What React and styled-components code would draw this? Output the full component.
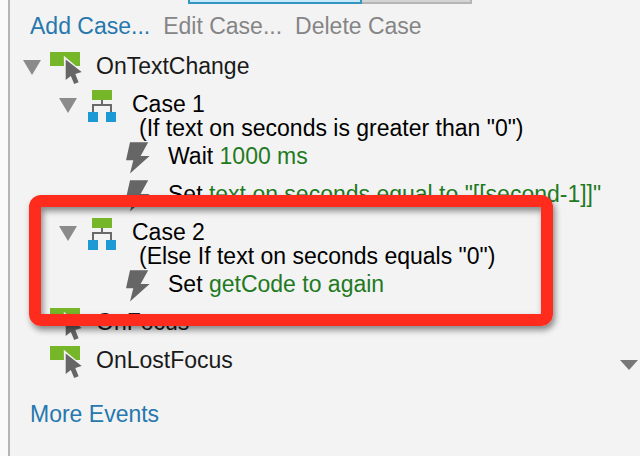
import { useState } from 'react';
import styled, { createGlobalStyle } from 'styled-components';

export default function App() {

    const [openEvent, setOpenEvent] = useState(true);
    const [openCases, setOpenCases] = useState({ 1: true, 2: true });

    function toggleCase(id) {
        setOpenCases({ ...openCases, [id]: !openCases[id] });
    }

    return (
        <>
            <GlobalStyle />
            <Panel>
                <Tabs>
                    <Tab $active $width={174} aria-label="Properties" />
                    <Tab $width={110} aria-label="Notes" />
                </Tabs>
                <Toolbar>
                    <ActionButton>Add Case...</ActionButton>
                    <ActionButton disabled>Edit Case...</ActionButton>
                    <ActionButton disabled>Delete Case</ActionButton>
                </Toolbar>
                <Tree>
                    <EventRow name="OnTextChange" open={openEvent} onToggle={() => setOpenEvent(!openEvent)} />
                    {openEvent && (
                        <>
                            <Case
                                name="Case 1"
                                condition={'(If text on seconds is greater than "0")'}
                                open={openCases[1]}
                                onToggle={() => toggleCase(1)}
                                actions={[
                                    { verb: "Wait", detail: "1000 ms" },
                                    { verb: "Set", detail: 'text on seconds equal to "[[second-1]]"' },
                                ]}
                            />
                            <Case
                                name="Case 2"
                                condition={'(Else If text on seconds equals "0")'}
                                open={openCases[2]}
                                onToggle={() => toggleCase(2)}
                                actions={[{ verb: "Set", detail: "getCode to again" }]}
                                highlighted
                            />
                        </>
                    )}
                    <EventRow name="OnFocus" />
                    <EventRow name="OnLostFocus" menu />
                </Tree>
                <Footer>
                    <ActionButton>More Events</ActionButton>
                </Footer>
            </Panel>
        </>
    )
}

function EventRow({ name, open, onToggle, menu }) {
    return (
        <Row $depth={0}>
            <ToggleSlot>
                {onToggle && <Toggle label={name} open={open} onClick={onToggle} />}
            </ToggleSlot>
            <EventIcon />
            <EventName>{name}</EventName>
            {menu && (
                <MenuButton aria-label="Show all events">
                    <svg width="18" height="10" viewBox="0 0 18 10">
                        <path d="M0 0H18L9 10Z" fill="#777" />
                    </svg>
                </MenuButton>
            )}
        </Row>
    )
}

function Case({ name, condition, open, onToggle, actions, highlighted }) {
    return (
        <CaseGroup>
            <Row $depth={1}>
                <ToggleSlot>
                    <Toggle label={name} open={open} onClick={onToggle} />
                </ToggleSlot>
                <CaseIcon />
                <CaseText>
                    <div>{name}</div>
                    <Condition>{condition}</Condition>
                </CaseText>
            </Row>
            {open && (
                <Actions>
                    {actions.map(action => (
                        <Row $depth={2} key={action.detail}>
                            <ToggleSlot />
                            <ActionIcon />
                            <div>{action.verb} <Detail>{action.detail}</Detail></div>
                        </Row>
                    ))}
                </Actions>
            )}
            {highlighted && <Highlight />}
        </CaseGroup>
    )
}

function Toggle({ label, open, onClick }) {
    return (
        <ToggleButton $open={open} aria-label={label} aria-expanded={open} onClick={onClick}>
            <svg width="18" height="15" viewBox="0 0 18 15">
                <path d="M0 0H18L9 15Z" fill="#8b8b8b" />
            </svg>
        </ToggleButton>
    )
}

function EventIcon() {
    return (
        <Icon width="32" height="28" viewBox="0 0 32 28">
            <rect width="30" height="14" fill="#76b729" />
            <path d="M13.8 3.8L26 14H14Z" fill="#f3f3f3" />
            <path d="M15.7 7.5L31.7 20L25.3 22L28.6 30.2L24.2 32L20.8 24L15.7 28Z" fill="#666" />
        </Icon>
    )
}

function CaseIcon() {
    return (
        <Icon width="32" height="28" viewBox="0 0 32 28">
            <path d="M16 10V15M7 22V15H25V22" fill="none" stroke="#6a6a6a" strokeWidth="2" />
            <rect x="6" y="0" width="20" height="10" fill="#76b729" />
            <rect x="2" y="22" width="10" height="10" fill="#1c9ad6" />
            <rect x="20" y="22" width="10" height="10" fill="#1c9ad6" />
        </Icon>
    )
}

function ActionIcon() {
    return (
        <Icon width="32" height="28" viewBox="0 0 32 28">
            <path d="M8 .3H26.2L18.6 14H27.6L8 31.6L11.3 18.3H4Z" fill="#666" />
        </Icon>
    )
}



/* --- STYLES --- */
const GlobalStyle = createGlobalStyle`
    *{
        box-sizing: border-box;
    }
    body{
        margin: 0;
        background: #fafafa;
        color: #000;
        font-family: "Liberation Sans", Arial, sans-serif;
        font-size: 23px;
        line-height: 28px;
    }
    button{
        padding: 0;
        border: none;
        background: none;
        font: inherit;
        cursor: pointer;
    }
    svg{
        display: block;
    }
`;
const Panel = styled.div`
    min-height: 100vh;
    margin-left: 8px;
    border-left: 2px solid #b5b5b5;
    background: #f3f3f3;
    overflow: hidden;
`;
const Tabs = styled.div`
    display: flex;
    padding-left: 178px;
`;
const Tab = styled.button`
    && {
        width: ${props => props.$width}px;
        height: 4px;
        background: ${props => props.$active ? "#c6eafb" : "#d4d4d4"};
        border: 2px solid ${props => props.$active ? "#3795c3" : "#b5b5b5"};
        border-top: none;
        border-left-width: ${props => props.$active ? "2px" : "0"};
    }
`;
const Toolbar = styled.div`
    display: flex;
    gap: 13px;
    padding: 8px 20px 12px;
`;
const ActionButton = styled.button`
    && {
        color: #2678ae;
        white-space: nowrap;
    }
    &&:disabled{
        color: #858585;
        cursor: default;
    }
`;
const Tree = styled.div`
    display: flex;
    flex-direction: column;
    gap: 10px;
    white-space: nowrap;
`;
const Row = styled.div`
    display: flex;
    align-items: flex-start;
    padding-left: ${props => 13 + props.$depth * 36}px;
`;
const ToggleSlot = styled.div`
    flex: none;
    width: 27px;
    padding-top: 8px;
`;
const ToggleButton = styled.button`
    display: block;
    svg{
        transform: ${props => props.$open ? "none" : "rotate(-90deg)"};
    }
`;
const Icon = styled.svg`
    flex: none;
    margin-right: 14px;
    overflow: visible;
`;
const EventName = styled.div`
    color: #1a1a1a;
`;
const MenuButton = styled.button`
    margin: 14px 2px 0 auto;
`;
const CaseGroup = styled.div`
    position: relative;
`;
const CaseText = styled.div`
    padding: 2px 0;
    line-height: 24px;
`;
const Condition = styled.div`
    padding-left: 7px;
`;
const Actions = styled.div`
    display: flex;
    flex-direction: column;
    gap: 10px;
`;
const Detail = styled.span`
    color: #1f7a1f;
`;
const Highlight = styled.div`
    position: absolute;
    z-index: 1;
    top: -23px;
    bottom: -28px;
    left: 19px;
    width: 524px;
    border: 12px solid #ff2b1c;
    border-radius: 12px;
    box-shadow: 2px 4px 6px rgba(0, 0, 0, 0.45), inset 2px 4px 6px rgba(0, 0, 0, 0.45);
    pointer-events: none;
`;
const Footer = styled.div`
    padding: 26px 20px;
`;
